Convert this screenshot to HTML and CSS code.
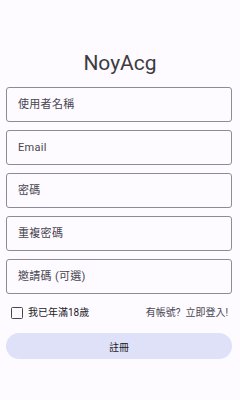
FILE: index.html
```html
<!DOCTYPE html>
<html lang="zh-Hant">
<head>
    <title>NoyAcg - 註冊</title>
    <meta charset="utf-8">
    <meta name="viewport" content="width=device-width, initial-scale=1">
    <link rel="stylesheet" href="styles.css">
</head>
<body>
    <main class="register">
        <h1 class="title">NoyAcg</h1>

        <form class="form">
            <input class="field" type="text" placeholder="使用者名稱">
            <input class="field" type="email" placeholder="Email">
            <input class="field" type="password" placeholder="密碼">
            <input class="field" type="password" placeholder="重複密碼">
            <input class="field" type="text" placeholder="邀請碼 (可選)">

            <div class="options">
                <label class="age-check">
                    <span class="box"></span>
                    我已年滿18歲
                </label>
                <a href="#" class="login-link">有帳號?&nbsp; 立即登入!</a>
            </div>

            <button type="button" class="submit">註冊</button>
        </form>
    </main>
</body>
</html>
```

FILE: styles.css
```css
:root {
    --bg-color: #fdfbff;
    --text-color: #49454f;
    --title-color: #1c1b1f;
    --border-color: #8f8b94;
    --button-bg: #dfe1f9;
}

* {
    margin: 0;
    padding: 0;
    box-sizing: border-box;
}

body {
    font-family: Roboto, "Noto Sans CJK TC", sans-serif;
    color: var(--text-color);
    background-color: var(--bg-color);
    width: 240px;
    height: 400px;
}

.register {
    padding: 49px 8px 0 6px;
}

.title {
    font-size: 21px;
    font-weight: 400;
    text-align: center;
    color: #3d3b40;
    line-height: 28px;
    margin-bottom: 10px;
    padding-left: 2px;
}

.form {
    display: flex;
    flex-direction: column;
    gap: 8px;
}

.field {
    height: 35px;
    width: 100%;
    border: 1px solid var(--border-color);
    border-radius: 3px;
    background: transparent;
    padding: 0 11px;
    font-family: inherit;
    font-size: 11px;
    color: var(--text-color);
}

.field::placeholder {
    color: var(--text-color);
    letter-spacing: 0.3px;
}

.options {
    display: flex;
    justify-content: space-between;
    align-items: center;
    padding: 4px 4px 0 5px;
    font-size: 10px;
    line-height: 14px;
}

.age-check {
    display: flex;
    align-items: center;
    gap: 5px;
    color: #1c1b1f;
}

.box {
    width: 12px;
    height: 12px;
    border: 1.5px solid #49454f;
    border-radius: 1.5px;
}

.login-link {
    color: var(--text-color);
    text-decoration: none;
}

.submit {
    margin-top: 5px;
    height: 26px;
    border: none;
    border-radius: 13px;
    background-color: var(--button-bg);
    font-family: inherit;
    font-size: 10px;
    color: #1c1b1f;
}
```
